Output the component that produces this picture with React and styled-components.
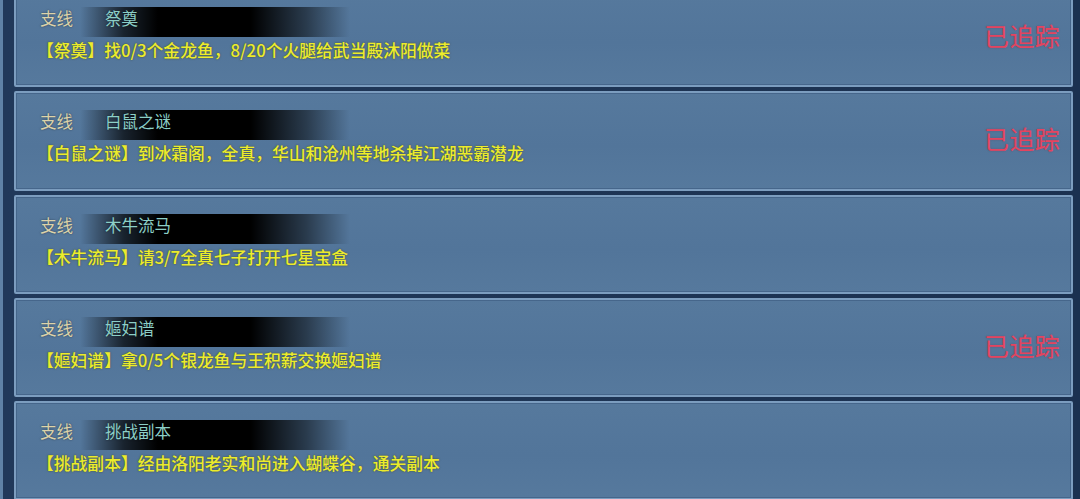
import styled, { createGlobalStyle } from 'styled-components';

const GlobalStyle = createGlobalStyle`
  html, body {
    margin: 0;
    padding: 0;
    height: 100%;
    overflow: hidden;
    background: #1c3352;
  }
  body {
    font-family: "Noto Sans CJK SC", "Noto Sans", sans-serif;
  }
`;

const Frame = styled.div`
  height: 499px;
  overflow: hidden;
  box-sizing: border-box;
  border-left: 3px solid #5f82a6;
  padding: 0 7px 0 11px;
  background: linear-gradient(90deg, #21395a 0%, #1b3150 100%);
  position: relative;
`;

const List = styled.div`
  display: flex;
  flex-direction: column;
  gap: 4px;
  margin-top: -12px;
`;

const Card = styled.div`
  height: 99.25px;
  box-sizing: border-box;
  border: 2px solid #7c9dbf;
  border-radius: 2px;
  background: linear-gradient(180deg, #56799d 0%, #52759a 55%, #56799d 100%);
  box-shadow: inset 0 0 0 1px rgba(40, 70, 105, 0.35);
  display: flex;
  align-items: center;
  padding: 0 11px 0 24px;
`;

const Body = styled.div`
  flex: 1;
  align-self: stretch;
  display: flex;
  flex-direction: column;
  padding-top: 17px;
`;

const Header = styled.div`
  width: 310px;
  height: 30px;
  display: flex;
  align-items: flex-start;
  line-height: 22px;
  background: linear-gradient(
    90deg,
    rgba(0, 0, 0, 0) 0%,
    rgba(0, 0, 0, 0) 13%,
    rgba(0, 0, 0, 0.7) 27%,
    #000 38%,
    #000 68%,
    rgba(0, 0, 0, 0.5) 86%,
    rgba(0, 0, 0, 0) 100%
  );
`;

const Kind = styled.span`
  width: 65px;
  font-size: 16.5px;
  color: #dcd3aa;
  text-shadow: 0 0 2px rgba(0, 0, 0, 0.5);
`;

const Title = styled.span`
  font-size: 16.5px;
  color: #8ccfc7;
  text-shadow: 0 0 2px rgba(0, 0, 0, 0.5);
`;

const Desc = styled.div`
  height: 24px;
  line-height: 24px;
  margin-top: 1px;
  font-size: 16.8px;
  font-weight: 500;
  color: #ecec2c;
  margin-left: -3px;
  text-shadow: 0 0 2px rgba(60, 60, 0, 0.7);
  white-space: nowrap;
`;

const Tracked = styled.div`
  font-size: 25px;
  line-height: 1;
  margin-bottom: 4px;
  color: #e4445f;
  letter-spacing: 0.3px;
  text-shadow: 0 0 2px rgba(120, 20, 40, 0.3);
`;

const quests = [
  { title: '祭奠', desc: '【祭奠】找0/3个金龙鱼，8/20个火腿给武当殿沐阳做菜', tracked: true },
  { title: '白鼠之谜', desc: '【白鼠之谜】到冰霜阁，全真，华山和沧州等地杀掉江湖恶霸潜龙', tracked: true },
  { title: '木牛流马', desc: '【木牛流马】请3/7全真七子打开七星宝盒', tracked: false },
  { title: '嫗妇谱', desc: '【嫗妇谱】拿0/5个银龙鱼与王积薪交换嫗妇谱', tracked: true },
  { title: '挑战副本', desc: '【挑战副本】经由洛阳老实和尚进入蝴蝶谷，通关副本', tracked: false },
];

function App() {
  return (
    <>
      <GlobalStyle />
      <Frame>
        <List>
          {quests.map((q) => (
            <Card key={q.title}>
              <Body>
                <Header>
                  <Kind>支线</Kind>
                  <Title>{q.title}</Title>
                </Header>
                <Desc>{q.desc}</Desc>
              </Body>
              {q.tracked && <Tracked>已追踪</Tracked>}
            </Card>
          ))}
        </List>
      </Frame>
    </>
  );
}

export default App;
